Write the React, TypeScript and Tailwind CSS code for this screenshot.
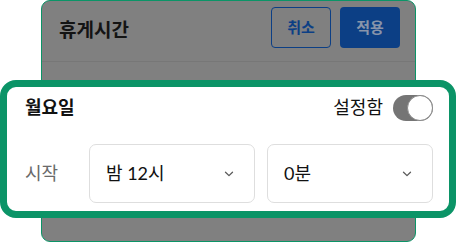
import React from 'react';

const font = "font-['Lato','Noto_Sans_CJK_KR',sans-serif]";

const Chevron = () => (
  <svg width="10" height="6" viewBox="0 0 10 6" fill="none" className="shrink-0">
    <path d="M1.5 1.2 L5 4.6 L8.5 1.2" stroke="#5a5a5a" strokeWidth="1.3" strokeLinecap="round" strokeLinejoin="round" />
  </svg>
);

const SelectBox: React.FC<{ value: string }> = ({ value }) => (
  <div className="flex-1 h-[59px] flex items-center justify-between pl-[16px] pr-[20px] bg-white border border-[#dedede] rounded-[7px]">
    <span className="text-[18px] text-[#111]">{value}</span>
    <Chevron />
  </div>
);

export default function App() {
  const [enabled, setEnabled] = React.useState(true);

  return (
    <div className={`relative w-[458px] h-[243px] bg-white overflow-hidden ${font}`}>
      {/* dimmed sheet behind */}
      <div className="ml-[41px] w-[375px] h-[242px] bg-[#808080] border border-[#0b9467] rounded-[9px]">
        <div className="h-[61px] flex items-center justify-between pl-[17px] pr-[15px] border-b border-[#777]">
          <h2 className="text-[19px] font-semibold text-[#141414] -mt-[2px]">휴게시간</h2>
          <div className="flex items-center gap-[9px] -mt-[7px]">
            <button className="w-[60px] h-[41px] rounded-[4px] border border-[#0c3f85] text-[15px] font-semibold text-[#0c3f85]">
              취소
            </button>
            <button className="w-[60px] h-[41px] rounded-[4px] bg-[#0c3f85] text-[15px] font-semibold text-[#8894aa]">
              적용
            </button>
          </div>
        </div>
      </div>

      {/* highlighted row card */}
      <div className="absolute left-0 top-[80px] w-[456px] border-[7px] border-[#0b9467] rounded-[16px] bg-white pt-[8px] pb-[8px] pl-[18px] pr-[16px]">
        <div className="h-[25px] flex items-center justify-between">
          <span className="text-[18px] font-semibold text-[#111]">월요일</span>
          <div className="flex items-center gap-[10px]">
            <span className="text-[18px] text-[#111]">설정함</span>
            <button
              onClick={() => setEnabled(v => !v)}
              className={`relative w-[40px] h-[26px] rounded-full flex items-center ${enabled ? 'bg-[#757575] justify-end' : 'bg-[#d8d8d8] justify-start'}`}
            >
              <span className="w-[26px] h-[26px] rounded-full bg-white border border-[#8a8a8a]" />
            </button>
          </div>
        </div>
        <div className="mt-[24px] flex items-center">
          <span className="w-[64px] text-[18px] text-[#6a6a6a]">시작</span>
          <div className="flex-1 flex gap-[12px]">
            <SelectBox value="밤 12시" />
            <SelectBox value="0분" />
          </div>
        </div>
      </div>
    </div>
  );
}
